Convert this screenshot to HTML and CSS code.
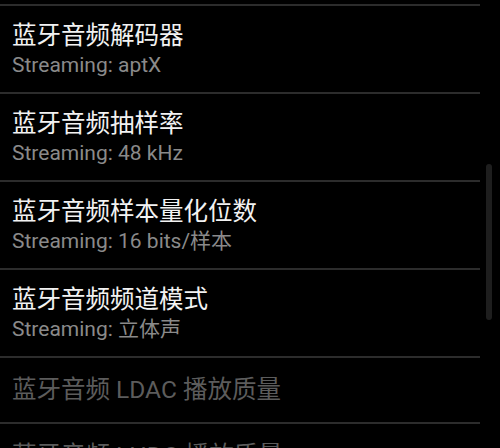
FILE: index.html
```html
<!DOCTYPE html>
<html lang="zh-CN">
<head>
  <meta charset="UTF-8">
  <title>开发者选项</title>
  <link rel="stylesheet" href="styles.css">
</head>
<body>

  <div class="pantalla">
    <div class="lista">
      <div class="opcion">
        <div class="titulo">蓝牙音频解码器</div>
        <div class="resumen">Streaming: aptX</div>
      </div>
      <div class="opcion">
        <div class="titulo">蓝牙音频抽样率</div>
        <div class="resumen">Streaming: 48 kHz</div>
      </div>
      <div class="opcion">
        <div class="titulo">蓝牙音频样本量化位数</div>
        <div class="resumen">Streaming: 16 bits/样本</div>
      </div>
      <div class="opcion">
        <div class="titulo">蓝牙音频频道模式</div>
        <div class="resumen">Streaming: 立体声</div>
      </div>
      <div class="opcion simple desactivada">
        <div class="titulo">蓝牙音频 LDAC 播放质量</div>
      </div>
      <div class="opcion simple desactivada">
        <div class="titulo">蓝牙音频 LHDC 播放质量</div>
      </div>
    </div>
    <div class="scroll"></div>
  </div>

</body>
</html>
```

FILE: styles.css
```css
* { box-sizing: border-box; }

body {
  margin: 0;
  background: #000;
  font-family: Roboto, "Noto Sans CJK SC", sans-serif;
  overflow: hidden;
}

.pantalla {
  position: relative;
  width: 500px;
  height: 448px;
  overflow: hidden;
}

.lista {
  width: 480px;
  padding-top: 4px;
}

.opcion {
  border-top: 2px solid #2c2c2c;
  padding: 14px 0 14px 12px;
}

.opcion.simple {
  padding: 16px 0 16px 12px;
}

.titulo {
  font-size: 24.5px;
  line-height: 32px;
  color: #f2f2f2;
}

.resumen {
  font-size: 21px;
  line-height: 26px;
  color: #8a8a8a;
}

.desactivada .titulo {
  color: #5c5c5c;
}

.scroll {
  position: absolute;
  left: 486px;
  top: 164px;
  width: 6px;
  height: 156px;
  border-radius: 3px;
  background: #1e1e1e;
}
```
